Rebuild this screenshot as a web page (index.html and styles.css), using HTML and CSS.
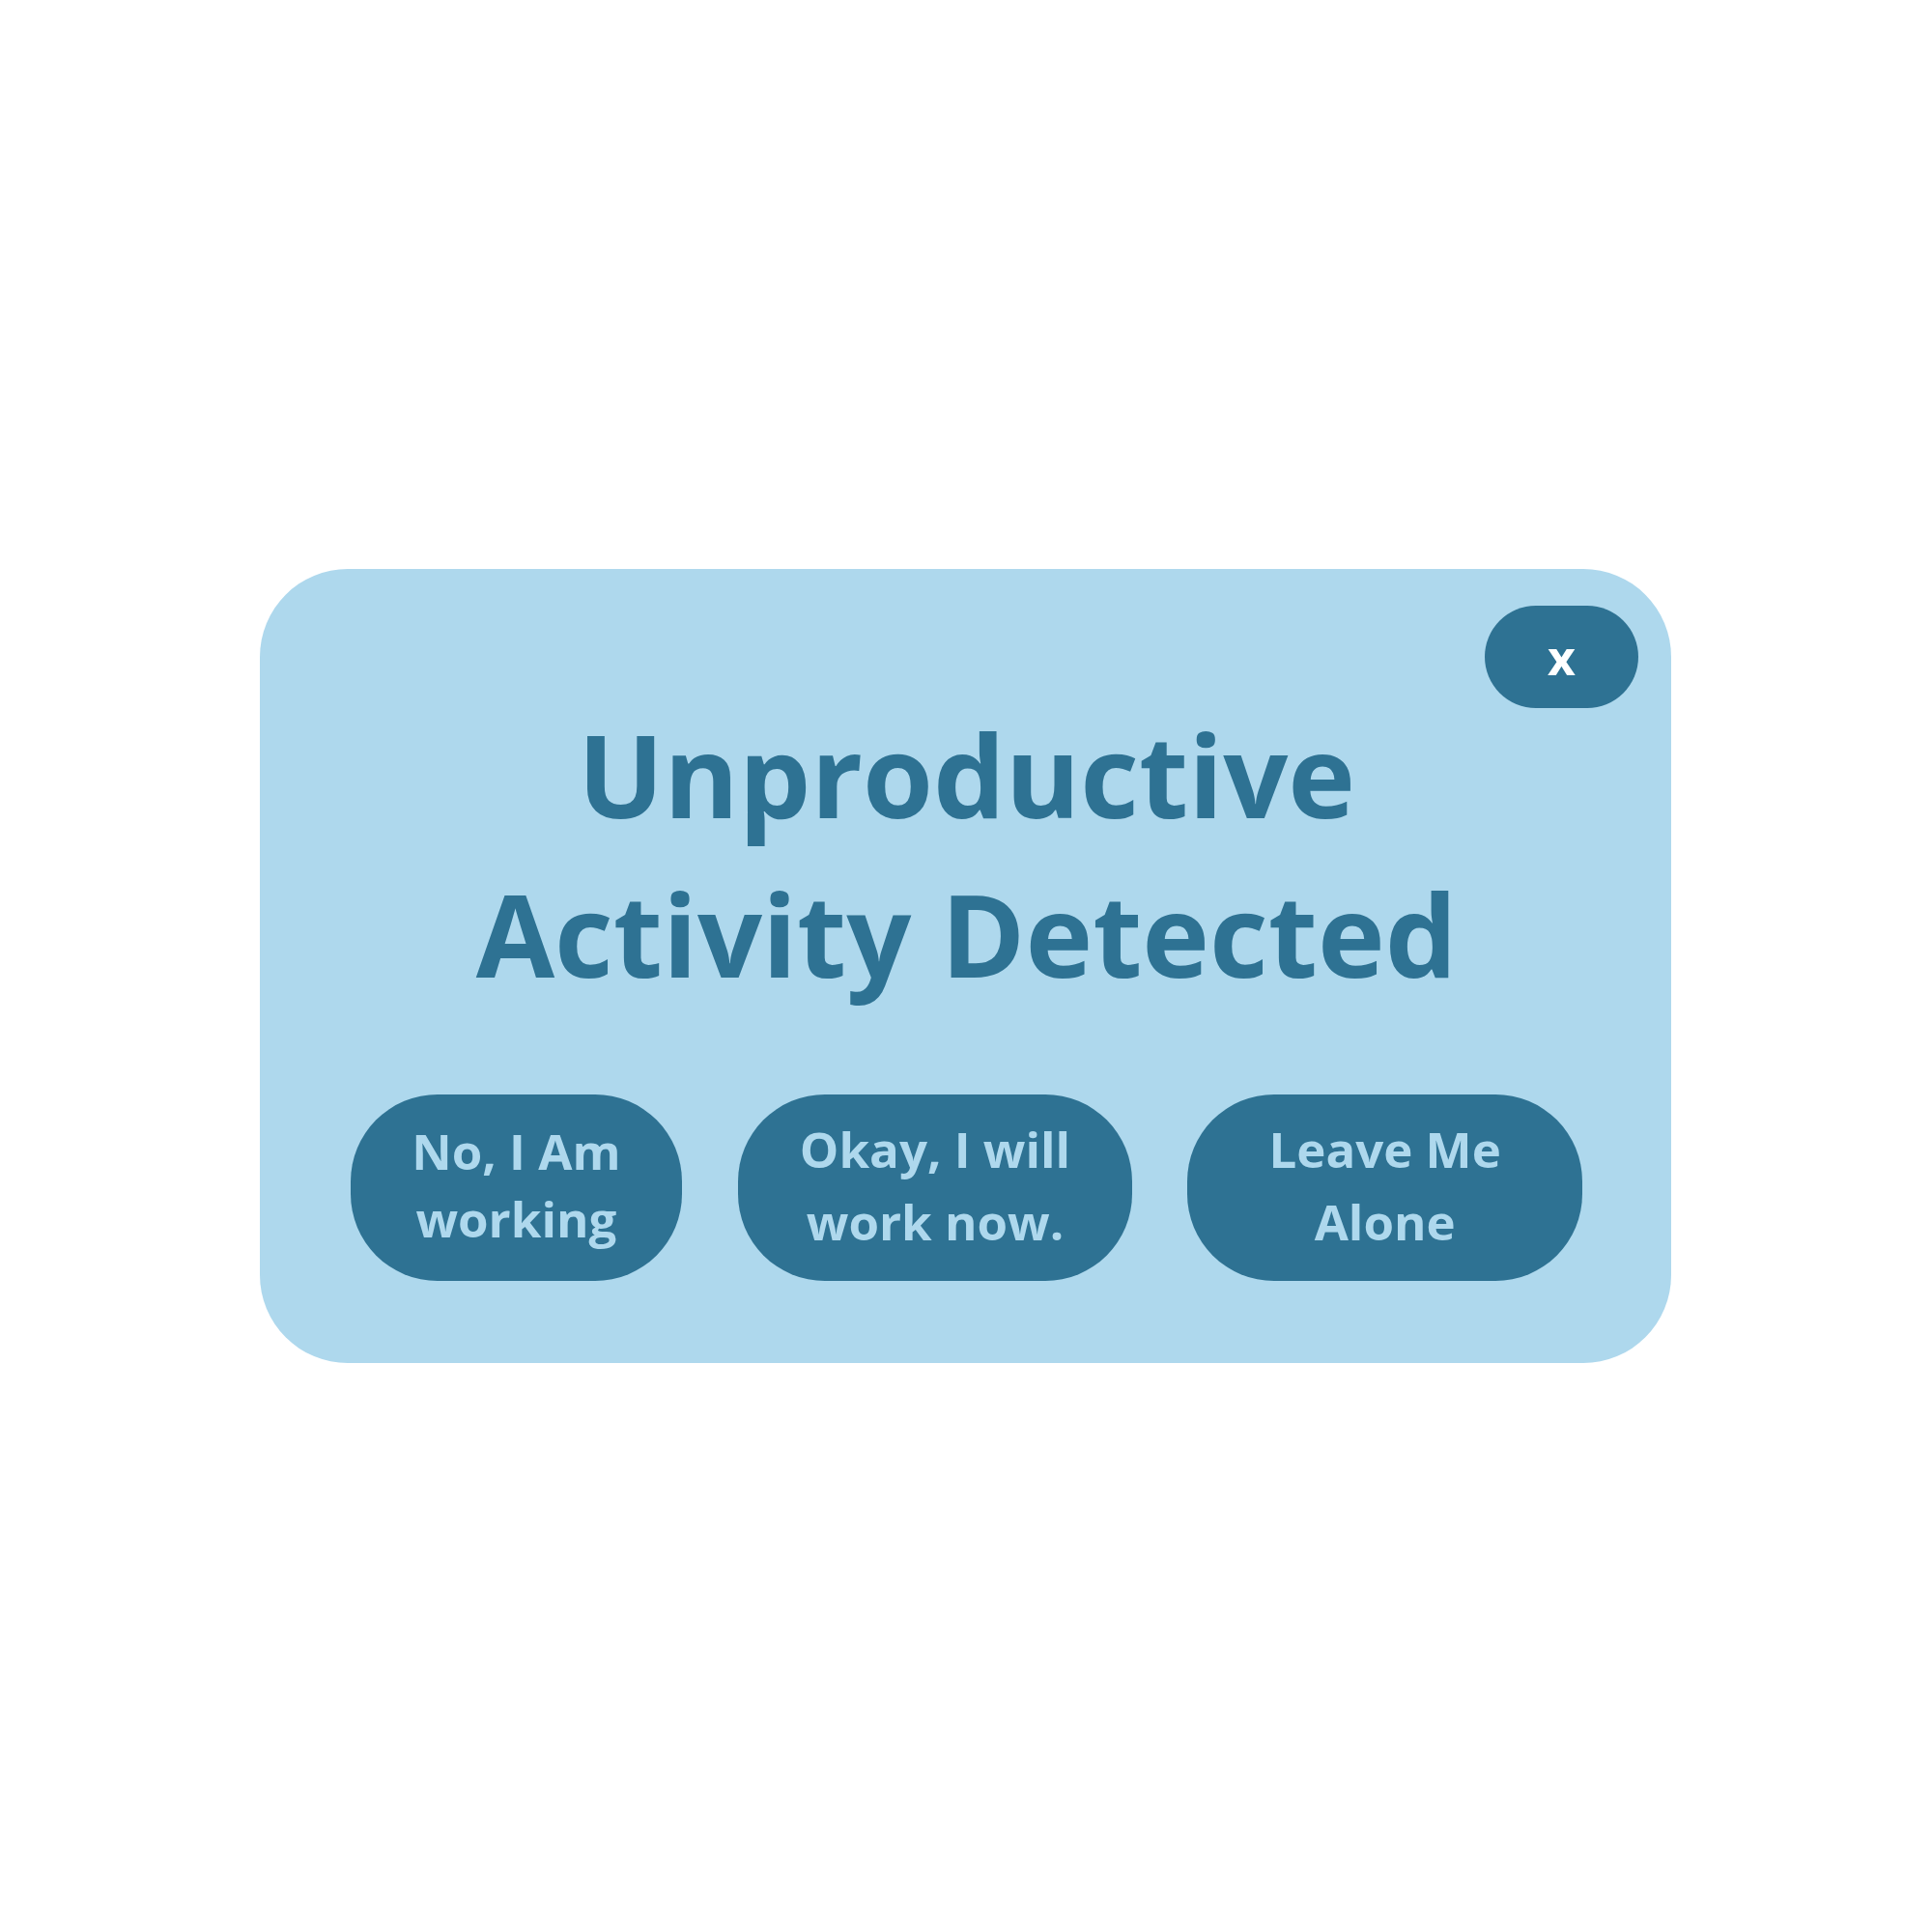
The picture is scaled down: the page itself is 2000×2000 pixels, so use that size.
FILE: index.html
```html
<!DOCTYPE html>
<html lang="en">
<head>
<meta charset="utf-8">
<title>Unproductive Activity Detected</title>
<link rel="stylesheet" href="styles.css">
</head>
<body>
<div class="page">
  <div class="card">
    <button class="close" type="button">x</button>
    <h1 class="title">Unproductive<br>Activity Detected</h1>
    <div class="actions">
      <button class="action action-1" type="button">No, I Am<br>working</button>
      <button class="action action-2" type="button">Okay, I will<br>work now.</button>
      <button class="action action-3" type="button">Leave Me<br>Alone</button>
    </div>
  </div>
</div>
</body>
</html>
```
FILE: styles.css
```css
html, body {
  margin: 0;
  padding: 0;
  background: #ffffff;
}
.page {
  width: 2000px;
  height: 2000px;
  padding: 589px 0 0 269px;
  box-sizing: border-box;
}
.card {
  position: relative;
  width: 1461px;
  height: 822px;
  box-sizing: border-box;
  background: #aed8ed;
  border-radius: 91px;
  padding: 130px 92px 0 94px;
  display: flex;
  flex-direction: column;
}
.close {
  position: absolute;
  top: 38px;
  right: 34px;
  width: 159px;
  height: 106px;
  border: 0;
  border-radius: 53px;
  background: #2e7293;
  color: #ffffff;
  font-family: "Open Sans", sans-serif;
  font-weight: 700;
  font-size: 50px;
  line-height: 1;
  padding: 0;
  display: flex;
  align-items: center;
  justify-content: center;
}
.title {
  margin: 0;
  font-family: "Open Sans", sans-serif;
  font-weight: 700;
  font-size: 118px;
  line-height: 165px;
  color: #2e7293;
  text-align: center;
}
.actions {
  margin-top: 84px;
  display: flex;
  gap: 57px;
}
.action {
  height: 193px;
  border: 0;
  border-radius: 90px;
  background: #2e7293;
  color: #aed8ed;
  font-family: "Open Sans", sans-serif;
  font-weight: 700;
  font-size: 51px;
  line-height: 75px;
  text-align: center;
  padding: 0 0 5px 0;
  display: flex;
  align-items: center;
  justify-content: center;
}
.action-1 { width: 343px; margin-right: 1px; line-height: 70px; padding-bottom: 8px; }
.action-2 { width: 409px; }
.action-3 { width: 409px; }
```
